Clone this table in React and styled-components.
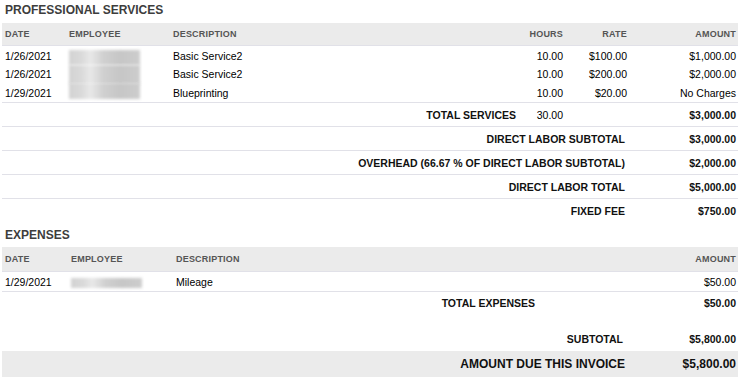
import React from "react";
import styled, { createGlobalStyle } from "styled-components";

const GlobalStyle = createGlobalStyle`
  body {
    margin: 0;
    background: #ffffff;
    font-family: "Liberation Sans", Arial, sans-serif;
    color: #000;
  }
`;

const SERVICE_COLS = "64px 104px 1fr 60px 64px 109px";
const EXPENSE_COLS = "66px 105px 1fr 109px";

const Page = styled.div`
  width: 736px;
  margin: 0 6px 0 2px;
`;

const SectionTitle = styled.div`
  font-size: 12px;
  font-weight: 700;
  line-height: 14px;
  color: #3d3d3d;
  padding: ${({ $top }) => $top}px 3px ${({ $bottom }) => $bottom}px;
`;

const Row = styled.div`
  display: grid;
  grid-template-columns: ${({ $cols }) => $cols};
  height: ${({ $h }) => $h}px;
  background: ${({ $shade }) => ($shade ? "#ebebeb" : "transparent")};
  border-bottom: ${({ $line }) => ($line ? "1px solid #e1e1e8" : "none")};
  margin-top: ${({ $gap }) => $gap || 0}px;
`;

const Cell = styled.div`
  display: flex;
  align-items: center;
  justify-content: ${({ $right }) => ($right ? "flex-end" : "flex-start")};
  padding: 0 ${({ $pr }) => ($pr === undefined ? 2 : $pr)}px 0 3px;
  font-size: 10.5px;
  white-space: nowrap;
`;

const HeadCell = styled(Cell)`
  font-size: 9px;
  font-weight: 700;
  color: #555555;
  letter-spacing: 0.2px;
`;

const SumCell = styled(Cell)`
  font-weight: 700;
  color: #111111;
  font-size: ${({ $big }) => ($big ? 12 : 10.5)}px;
`;

const Blurred = styled.div`
  width: 71px;
  height: ${({ $h }) => $h}px;
  margin-top: ${({ $shift }) => $shift || 0}px;
  background: linear-gradient(
    to right,
    #d2d2d2 0%,
    #dadada 18%,
    #e8e8e8 30%,
    #d0d0d0 48%,
    #c6c6c6 72%,
    #cdcdcd 100%
  );
  filter: blur(1.5px);
`;

const services = [
  { date: "1/26/2021", desc: "Basic Service2", hours: "10.00", rate: "$100.00", amount: "$1,000.00", blur: 15, shift: 4 },
  { date: "1/26/2021", desc: "Basic Service2", hours: "10.00", rate: "$200.00", amount: "$2,000.00", blur: 19, shift: 0 },
  { date: "1/29/2021", desc: "Blueprinting", hours: "10.00", rate: "$20.00", amount: "No Charges", blur: 16, shift: -3 },
];

const summaries = [
  { label: "DIRECT LABOR SUBTOTAL", value: "$3,000.00" },
  { label: "OVERHEAD (66.67 % OF DIRECT LABOR SUBTOTAL)", value: "$2,000.00" },
  { label: "DIRECT LABOR TOTAL", value: "$5,000.00" },
  { label: "FIXED FEE", value: "$750.00", last: true },
];

const App = () => {
  return (
    <>
      <GlobalStyle />
      <Page>
        <SectionTitle $top={3} $bottom={6}>PROFESSIONAL SERVICES</SectionTitle>
        <Row $cols={SERVICE_COLS} $h={22} $shade $line>
          <HeadCell>DATE</HeadCell>
          <HeadCell>EMPLOYEE</HeadCell>
          <HeadCell>DESCRIPTION</HeadCell>
          <HeadCell $right>HOURS</HeadCell>
          <HeadCell $right>RATE</HeadCell>
          <HeadCell $right>AMOUNT</HeadCell>
        </Row>
        {services.map((s, i) => (
          <Row key={i} $cols={SERVICE_COLS} $h={18.8} $line={i === services.length - 1}>
            <Cell>{s.date}</Cell>
            <Cell>
              <Blurred $h={s.blur} $shift={s.shift} />
            </Cell>
            <Cell>{s.desc}</Cell>
            <Cell $right>{s.hours}</Cell>
            <Cell $right>{s.rate}</Cell>
            <Cell $right>{s.amount}</Cell>
          </Row>
        ))}
        <Row $cols="1fr 47px 173px" $h={23} $line>
          <SumCell $right>TOTAL SERVICES</SumCell>
          <Cell $right>30.00</Cell>
          <SumCell $right>$3,000.00</SumCell>
        </Row>
        {summaries.map((s) => (
          <Row key={s.label} $cols="1fr 109px" $h={23} $line={!s.last}>
            <SumCell $right $pr={4}>{s.label}</SumCell>
            <SumCell $right>{s.value}</SumCell>
          </Row>
        ))}

        <SectionTitle $top={6} $bottom={5}>EXPENSES</SectionTitle>
        <Row $cols={EXPENSE_COLS} $h={24} $shade $line>
          <HeadCell>DATE</HeadCell>
          <HeadCell>EMPLOYEE</HeadCell>
          <HeadCell>DESCRIPTION</HeadCell>
          <HeadCell $right>AMOUNT</HeadCell>
        </Row>
        <Row $cols={EXPENSE_COLS} $h={18.5} $line>
          <Cell>1/29/2021</Cell>
          <Cell>
            <Blurred $h={10} $shift={2} />
          </Cell>
          <Cell>Mileage</Cell>
          <Cell $right>$50.00</Cell>
        </Row>
        <Row $cols="1fr 109px" $h={22}>
          <SumCell $right $pr={94}>TOTAL EXPENSES</SumCell>
          <SumCell $right>$50.00</SumCell>
        </Row>
        <Row $cols="1fr 109px" $h={24} $gap={13}>
          <SumCell $right $pr={6}>SUBTOTAL</SumCell>
          <SumCell $right>$5,800.00</SumCell>
        </Row>
        <Row $cols="1fr 109px" $h={26} $shade>
          <SumCell $right $big $pr={4}>AMOUNT DUE THIS INVOICE</SumCell>
          <SumCell $right $big>$5,800.00</SumCell>
        </Row>
      </Page>
    </>
  );
};

export default App;
